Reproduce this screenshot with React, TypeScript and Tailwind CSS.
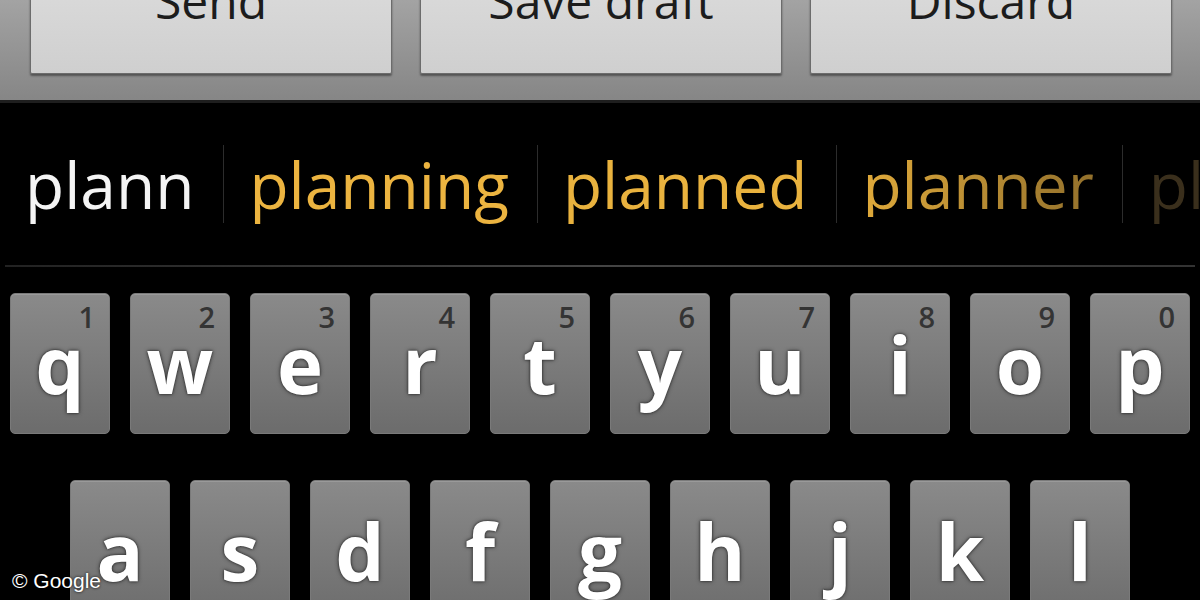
import React from 'react';

const row1 = [
  { k: 'q', n: '1' },
  { k: 'w', n: '2' },
  { k: 'e', n: '3' },
  { k: 'r', n: '4' },
  { k: 't', n: '5' },
  { k: 'y', n: '6' },
  { k: 'u', n: '7' },
  { k: 'i', n: '8' },
  { k: 'o', n: '9' },
  { k: 'p', n: '0' },
];

const row2 = ['a', 's', 'd', 'f', 'g', 'h', 'j', 'k', 'l'];

const Key = ({ letter, num }: { letter: string; num?: string }) => {
  return (
    <div className="relative w-[100px] h-[141px] shrink-0 rounded-[5px] border border-[#7a7a7a] bg-gradient-to-b from-[#8a8a8a] to-[#6c6c6c] shadow-[inset_0_1px_0_#9a9a9a]">
      {num && (
        <span className="absolute right-[14px] top-[8px] text-[29px] leading-none font-semibold text-[#343434]">
          {num}
        </span>
      )}
      <div className="pt-[31px] text-center text-[78px] leading-none font-bold text-white [text-shadow:0_0_4px_#333,0_0_2px_#222]">
        {letter}
      </div>
    </div>
  );
};

const Divider = () => <div className="w-px h-[78px] bg-[#2c2c2c] shrink-0" />;

const App = () => {
  return (
    <div className="relative w-[1200px] h-[600px] overflow-hidden bg-black font-['Open_Sans',sans-serif]">
      {/* action buttons, cut at the top */}
      <div className="h-[100px] overflow-hidden bg-gradient-to-b from-[#a3a3a3] to-[#868686] flex items-end gap-[28px] px-[30px] pb-[26px]">
        {['Send', 'Save draft', 'Discard'].map((label) => (
          <div
            key={label}
            className="w-[362px] h-[120px] shrink-0 rounded-[2px] border border-[#6c6c6c] bg-gradient-to-b from-[#dedede] to-[#cfcfcf] shadow-[0_2px_2px_#555] pt-[22px] text-center text-[48px] leading-none text-[#1c1c1c]"
          >
            {label}
          </div>
        ))}
      </div>
      <div className="h-[3px] bg-[#1e1e1e]" />

      {/* suggestion strip */}
      <div className="h-[162px] flex items-center">
        <span className="pl-[25px] pr-[29px] text-[64px] leading-none text-[#f4f4f4] pt-[2px]">plann</span>
        <Divider />
        <span className="pl-[25px] pr-[28px] text-[64px] leading-none text-[#ecb440] pt-[2px]">planning</span>
        <Divider />
        <span className="pl-[25px] pr-[29px] text-[64px] leading-none text-[#e9b23e] pt-[2px]">planned</span>
        <Divider />
        <span className="pl-[25px] pr-[28px] text-[64px] leading-none bg-gradient-to-r from-[#e8b03c] to-[#8a6a2a] bg-clip-text text-transparent pt-[2px]">
          planner
        </span>
        <Divider />
        <span className="pl-[26px] text-[64px] leading-none text-[#3a2f1c] pt-[2px]">pl</span>
      </div>
      <div className="mx-[5px] h-[2px] bg-gradient-to-r from-[#222] via-[#444] to-[#333]" />

      {/* keyboard */}
      <div className="pt-[26px] flex flex-col gap-[46px]">
        <div className="flex gap-[20px] pl-[10px]">
          {row1.map((r) => (
            <Key key={r.k} letter={r.k} num={r.n} />
          ))}
        </div>
        <div className="flex gap-[20px] pl-[70px]">
          {row2.map((l) => (
            <Key key={l} letter={l} />
          ))}
        </div>
      </div>

      <div className="absolute left-[12px] bottom-[9px] text-[21px] leading-none text-white font-['Liberation_Sans',Arial,sans-serif] [text-shadow:0_0_3px_#000]">
        © Google
      </div>
    </div>
  );
};

export default App;
